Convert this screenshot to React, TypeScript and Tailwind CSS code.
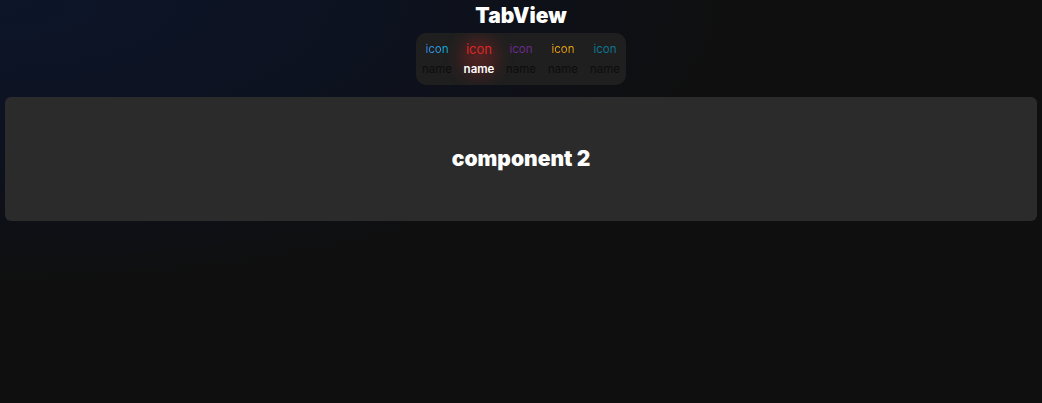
import React, { useState } from "react"

const tabs = [
  { icon: "bg-gradient-to-r from-[#3b82f6] to-[#06b6d4] bg-clip-text text-transparent", name: "name" },
  { icon: "text-[#dc2626] text-[13px]", name: "name" },
  { icon: "text-[#6b2a8c]", name: "name" },
  { icon: "bg-gradient-to-b from-[#facc15] to-[#d97706] bg-clip-text text-transparent", name: "name" },
  { icon: "text-[#0e7490]", name: "name" },
]

export default function App() {
  const [active, setActive] = useState(1)

  return (
    <div
      className="min-h-screen w-full bg-[#0f0f0f] bg-[radial-gradient(ellipse_at_0%_0%,#0c1529_0%,#0d1220_25%,#0f0f0f_50%)] text-white"
      style={{ fontFamily: "Inter, 'Noto Sans', sans-serif" }}
    >
      <div className="flex flex-col items-center pt-[3px]">
        <h1 className="text-[21px] leading-[26px] font-black">TabView</h1>
        <div className="mt-[4px] flex overflow-hidden rounded-[10px] bg-[#1f1f1f] py-[6px]">
          {tabs.map((t, i) => (
            <button
              key={i}
              onClick={() => setActive(i)}
              className="relative flex w-[42px] flex-col items-center"
            >
              {/* glow behind active tab */}
              {i === active && (
                <span className="absolute left-[2px] top-[-2px] h-[40px] w-[38px] rounded-full bg-[#dc2626]/25 blur-[8px]" />
              )}
              <span className={"relative h-[20px] leading-[20px] text-[11.5px] " + t.icon}>icon</span>
              <span
                className={
                  "relative h-[20px] leading-[20px] text-[11.5px] " +
                  (i === active ? "font-semibold text-white" : "text-[#0d0d0d]")
                }
              >
                {t.name}
              </span>
            </button>
          ))}
        </div>
      </div>
      <div className="mx-[5px] mt-[12px] flex h-[124px] items-center justify-center rounded-[6px] bg-[#2b2b2b]">
        <h2 className="text-[21px] font-black">component 2</h2>
      </div>
    </div>
  )
}
